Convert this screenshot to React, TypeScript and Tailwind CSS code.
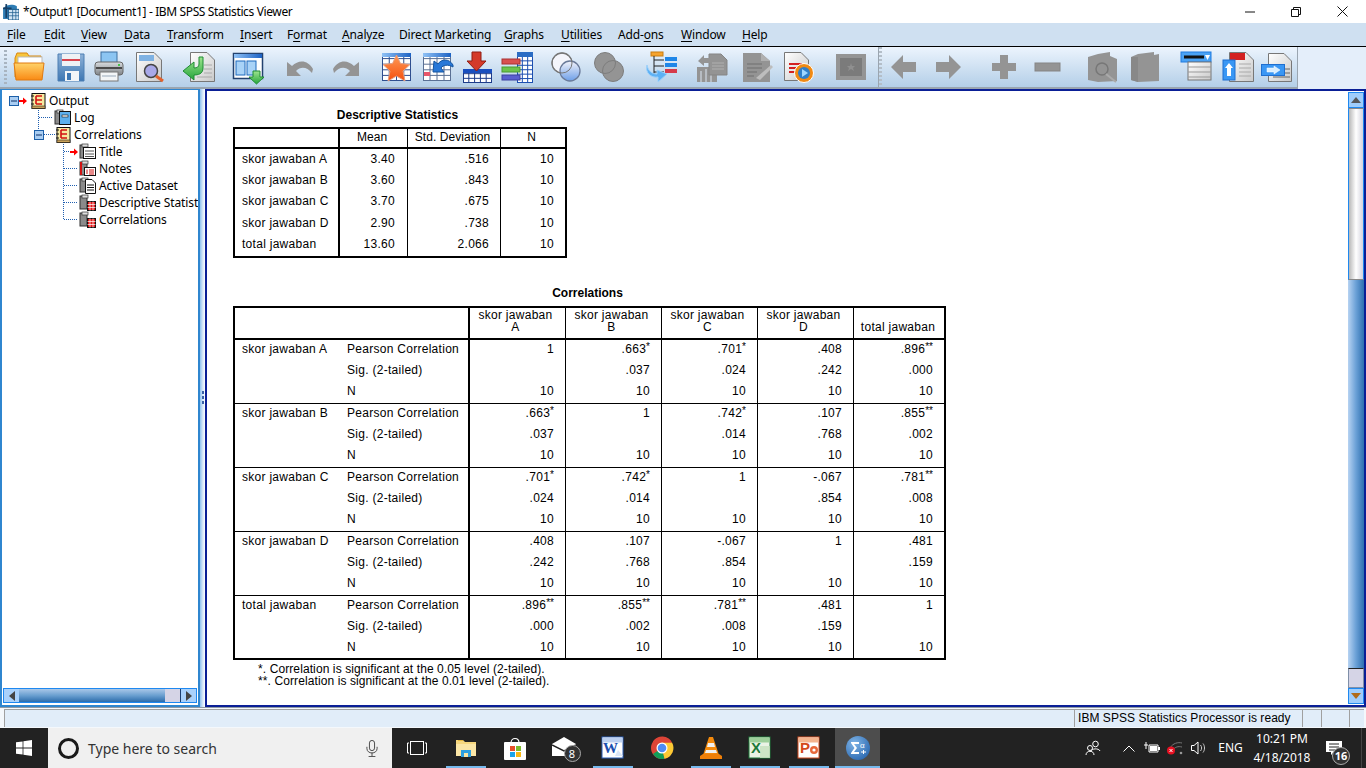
import React from "react";

const ui = "font-['Noto_Sans','Open_Sans',sans-serif]";
const arial = "font-['Liberation_Sans',Arial,sans-serif]";

function Grid({ x, y, w, h, cols, rows, c = "#2f4f8f", fill = "#fff" }: { x: number; y: number; w: number; h: number; cols: number; rows: number; c?: string; fill?: string }) {
  const v = [];
  for (let i = 1; i < cols; i++) v.push(<line key={"v" + i} x1={x + (w * i) / cols} y1={y} x2={x + (w * i) / cols} y2={y + h} stroke={c} />);
  for (let i = 1; i < rows; i++) v.push(<line key={"h" + i} x1={x} y1={y + (h * i) / rows} x2={x + w} y2={y + (h * i) / rows} stroke={c} />);
  return (
    <g>
      <rect x={x + 0.5} y={y + 0.5} width={w - 1} height={h - 1} fill={fill} stroke={c} />
      {v}
    </g>
  );
}

function Defs() {
  return (
    <svg width="0" height="0" className="absolute">
      <defs>
        <linearGradient id="fo" x1="0" y1="0" x2="0" y2="1"><stop offset="0" stopColor="#ffd36a" /><stop offset="1" stopColor="#f98a14" /></linearGradient>
        <linearGradient id="bl" x1="0" y1="0" x2="0" y2="1"><stop offset="0" stopColor="#8fb2d8" /><stop offset="1" stopColor="#3d77b3" /></linearGradient>
        <linearGradient id="gr" x1="0" y1="0" x2="0" y2="1"><stop offset="0" stopColor="#d9dcdf" /><stop offset="1" stopColor="#7f8488" /></linearGradient>
        <linearGradient id="dc" x1="0" y1="0" x2="1" y2="1"><stop offset="0" stopColor="#fff" /><stop offset="1" stopColor="#c9c9c9" /></linearGradient>
        <linearGradient id="gn" x1="0" y1="0" x2="0" y2="1"><stop offset="0" stopColor="#9fe58f" /><stop offset="1" stopColor="#25a53b" /></linearGradient>
        <linearGradient id="hd" x1="0" y1="0" x2="1" y2="0"><stop offset="0" stopColor="#8fc1f5" /><stop offset="1" stopColor="#1c62c4" /></linearGradient>
        <linearGradient id="sc" x1="0" y1="0" x2="0" y2="1"><stop offset="0" stopColor="#f3f3fa" /><stop offset="1" stopColor="#6d9fe8" /></linearGradient>
        <linearGradient id="or" x1="0" y1="0" x2="0" y2="1"><stop offset="0" stopColor="#ff9a55" /><stop offset="1" stopColor="#f4500f" /></linearGradient>
      </defs>
    </svg>
  );
}

const G = "#949494";
const Doc = ({ x = 6, w = 24, y = 1, h = 30, gray = false }: { x?: number; w?: number; y?: number; h?: number; gray?: boolean }) => (
  <path d={`M${x + 0.5} ${y + 0.5}H${x + w - 8}L${x + w - 0.5} ${y + 8}V${y + h - 0.5}H${x + 0.5}Z`} fill={gray ? G : "url(#dc)"} stroke={gray ? "#8a8a8a" : "#777"} />
);

const toolbarIcons: { ml: string; el: React.ReactNode }[] = [
  { ml: "ml-[6px]", el: (<g><path d="M2 7 L4 2H14L16 5H28V26H2Z" fill="#f7c53c" stroke="#d9860f" /><rect x="5" y="6" width="24" height="10" fill="#fff" stroke="#bbb" /><path d="M1 12H31L29 29H3Z" fill="url(#fo)" stroke="#e07a10" /></g>) },
  { ml: "ml-[10px]", el: (<g><path d="M3 3H29V30H3Z" fill="url(#bl)" stroke="#4c7fb3" /><rect x="7" y="3" width="18" height="12" fill="#eef1f5" /><rect x="7" y="8" width="18" height="2" fill="#d8434f" /><rect x="10" y="20" width="14" height="10" fill="#f2f5f8" /><rect x="12" y="22" width="4" height="7" fill="#3d77b3" /></g>) },
  { ml: "ml-[6px]", el: (<g><rect x="8" y="1" width="16" height="12" fill="#8cc5f2" stroke="#3d6f9f" /><rect x="2" y="11" width="28" height="13" rx="3" fill="url(#gr)" stroke="#666" /><rect x="3" y="16" width="26" height="2" fill="#4a4a4a" /><rect x="7" y="21" width="18" height="9" fill="#f3f6f8" stroke="#777" /><line x1="9" y1="25" x2="23" y2="25" stroke="#9ab" /><rect x="25" y="13" width="2" height="2" fill="#47c24a" /></g>) },
  { ml: "ml-[9px]", el: (<g><Doc x={2} w={26} /><rect x="5" y="4" width="15" height="6" fill="#7fb2e3" /><circle cx="17" cy="20" r="6.5" fill="#a8a8e8" stroke="#444" strokeWidth="1.5" /><line x1="22" y1="25" x2="29" y2="30" stroke="#e2622d" strokeWidth="3" /></g>) },
  { ml: "ml-[17px]", el: (<g><Doc x={7} w={25} /><g stroke="#aaa"><line x1="21" y1="14" x2="29" y2="14" /><line x1="21" y1="18" x2="29" y2="18" /><line x1="21" y1="22" x2="29" y2="22" /><line x1="14" y1="26" x2="29" y2="26" /></g><path d="M16 6H20V17C20 23 15 24 11 24V29L0 20L11 11V17C14 17 16 16 16 13Z" fill="url(#gn)" stroke="#1e8c34" /></g>) },
  { ml: "ml-[17px]", el: (<g><rect x="1.5" y="2.5" width="29" height="25" fill="#fff" stroke="#23426f" strokeWidth="1.5" /><rect x="2" y="3" width="28" height="4" fill="url(#hd)" /><rect x="4" y="10" width="9" height="14" fill="#a9d3f7" stroke="#1e6bbd" /><rect x="15" y="10" width="9" height="14" fill="#a9d3f7" stroke="#1e6bbd" /><path d="M21 20H28V26H32L24.5 33L17 26H21Z" fill="url(#gn)" stroke="#1e8c34" /></g>) },
  { ml: "ml-[21px]", el: <path d="M2 11V25H16L11 20C16 15 22 16 27 22L28 18C23 9 14 8 7 15Z" fill={G} /> },
  { ml: "ml-[12px]", el: <path d="M30 11V25H16L21 20C16 15 10 16 5 22L4 18C9 9 18 8 25 15Z" fill={G} /> },
  { ml: "ml-[20px]", el: (<g><Grid x={1} y={2} w={29} h={28} cols={4} rows={5} c="#2f4f8f" fill="#fff" /><rect x="1" y="2" width="29" height="4" fill="url(#hd)" /><path d="M15.5 4L19.5 12.5L29 13.5L22 20L24 30L15.5 25L7 30L9 20L2 13.5L11.5 12.5Z" fill="url(#or)" stroke="#e8a080" /></g>) },
  { ml: "ml-[9px]", el: (<g><Grid x={1} y={2} w={28} h={28} cols={4} rows={5} c="#5a7094" /><rect x="1" y="2" width="28" height="4" fill="url(#hd)" /><rect x="2" y="21" width="6" height="4" fill="#e8566a" /><path d="M31 14C27 7 19 8 16 13L12 10L11 21H22L19 17C21 14 26 13 31 16Z" fill="#2878d8" stroke="#15559f" /></g>) },
  { ml: "ml-[7px]", el: (<g><Grid x={2} y={18} w={29} h={14} cols={5} rows={3} c="#1d3c8a" fill="#fff" /><rect x="2" y="18" width="29" height="4" fill="#1a4fbf" /><path d="M11 1H20V10H25L15.5 20L6 10H11Z" fill="#d43a2a" stroke="#8f1d12" /></g>) },
  { ml: "ml-[8px]", el: (<g><Grid x={16} y={1} w={16} h={31} cols={3} rows={7} c="#1d4fb0" fill="#fff" /><rect x="16" y="1" width="16" height="5" fill="#2a6cc4" /><rect x="1" y="8" width="18" height="5" fill="#d95050" stroke="#a33" /><rect x="1" y="16" width="18" height="5" fill="#6dc44c" stroke="#4a9a30" /><rect x="1" y="24" width="18" height="5" fill="#5a5fd0" stroke="#3d40a0" /></g>) },
  { ml: "ml-[17px]", el: (<g><circle cx="12" cy="12" r="10" fill="#f4f5fb" stroke="#777" strokeWidth="1.3" /><circle cx="20" cy="20" r="10" fill="url(#sc)" stroke="#6a7a99" strokeWidth="1.3" /><circle cx="12" cy="12" r="10" fill="none" stroke="#777" strokeWidth="1" /></g>) },
  { ml: "ml-[11px]", el: (<g><circle cx="12" cy="12" r="10.5" fill={G} /><circle cx="20" cy="20" r="10.5" fill={G} stroke="#7d7d7d" /><circle cx="12" cy="12" r="10.5" fill="none" stroke="#7d7d7d" /></g>) },
  { ml: "ml-[20px]", el: (<g><rect x="6" y="1" width="12" height="4" fill="#f6a32e" stroke="#c97c10" /><path d="M9 5V24M9 9H19M9 15H19M9 21H19" stroke="#222" fill="none" /><rect x="20" y="6" width="12" height="4" fill="#1f86e8" /><rect x="20" y="12" width="12" height="4" fill="#1f86e8" /><rect x="20" y="18" width="12" height="4" fill="#d63a4a" /><path d="M2 14C0 22 6 27 13 26V31L22 23L12 19V23C7 23 3 20 2 14Z" fill="#5db1f5" stroke="#9cd0fa" /></g>) },
  { ml: "ml-[19px]", el: (<g fill={G}><rect x="1" y="16" width="20" height="15" /><g fill="#b7bcc2"><rect x="4" y="20" width="2" height="11" /><rect x="9" y="18" width="2" height="13" /><rect x="14" y="22" width="2" height="9" /></g><path d="M13 3H25L31 9V24H13Z" stroke="#858585" /><g stroke="#b0b0b0"><line x1="16" y1="12" x2="28" y2="12" /><line x1="16" y1="15" x2="28" y2="15" /><line x1="16" y1="18" x2="28" y2="18" /></g><path d="M2 10L8 4V7H14V12H8V15Z" /></g>) },
  { ml: "ml-[14px]", el: (<g><path d="M1 2H19L28 10V31H1Z" fill={G} /><path d="M19 2L28 10H19Z" fill="#b0b0b0" /><g stroke="#6f6f6f"><line x1="5" y1="13" x2="20" y2="13" /><line x1="5" y1="17" x2="20" y2="17" /><line x1="5" y1="21" x2="15" y2="21" /><line x1="5" y1="25" x2="12" y2="25" /></g><path d="M14 27L29 14L31 16L18 29Z" fill="#bdbdbd" /></g>) },
  { ml: "ml-[9px]", el: (<g><Doc x={1} w={25} y={1} h={29} /><rect x="6" y="12" width="13" height="2" fill="#d42020" /><rect x="6" y="16" width="11" height="2" fill="#d42020" /><rect x="6" y="20" width="9" height="2" fill="#d42020" /><circle cx="21" cy="22" r="9.5" fill="#f08a14" stroke="#fff" /><circle cx="21" cy="22" r="6" fill="#2f7ec8" /><path d="M19 18L25 22L19 26Z" fill="#9fd6ff" /></g>) },
  { ml: "ml-[20px]", el: (<g><rect x="1" y="3" width="30" height="26" fill={G} /><rect x="5" y="7" width="22" height="18" fill="#7b7b7b" /><path d="M16 12L17 15L20 15L18 17L19 20L16 18L13 20L14 17L12 15L15 15Z" fill="#8f8f8f" /></g>) },
];

const toolbarIcons2: { ml: string; el: React.ReactNode }[] = [
  { ml: "ml-[6px]", el: <path d="M3 16L15 4V11H28V21H15V28Z" fill={G} /> },
  { ml: "ml-[12px]", el: <path d="M29 16L17 4V11H4V21H17V28Z" fill={G} /> },
  { ml: "ml-[24px]", el: <path d="M12 4H20V12H28V20H20V28H12V20H4V12H12Z" fill={G} /> },
  { ml: "ml-[11px]", el: <rect x="4" y="12" width="25" height="8" fill={G} stroke="#858585" /> },
  { ml: "ml-[23px]", el: (<g fill={G}><path d="M2 6L12 3L24 1V5L31 8V30L12 31L2 29Z" /><circle cx="16" cy="18" r="6" fill="none" stroke="#777" strokeWidth="1.5" /><line x1="20" y1="23" x2="30" y2="31" stroke="#aaa" strokeWidth="2" /></g>) },
  { ml: "ml-[11px]", el: (<g><path d="M2 6L9 3L25 1V4L30 3V30L9 31L2 29Z" fill={G} /><path d="M2 6L9 6V31L2 29Z" fill="#888" /></g>) },
  { ml: "ml-[19px]", el: (<g><rect x="1" y="1" width="30" height="10" fill="#4aa2f4" stroke="#1f7ae0" /><rect x="4" y="4.5" width="20" height="3" fill="#111" /><path d="M25 4H30L27.5 9Z" fill="#fff" /><rect x="8" y="11" width="23" height="18" fill="url(#dc)" stroke="#777" /><line x1="8" y1="16" x2="31" y2="16" stroke="#999" /><line x1="8" y1="21" x2="31" y2="21" stroke="#999" /><line x1="8" y1="26" x2="31" y2="26" stroke="#999" /></g>) },
  { ml: "ml-[11px]", el: (<g><Doc x={6} w={25} y={1} h={30} /><rect x="7" y="2" width="15" height="7" fill="#d32020" /><g stroke="#aaa"><line x1="16" y1="13" x2="28" y2="13" /><line x1="16" y1="17" x2="28" y2="17" /><line x1="16" y1="21" x2="28" y2="21" /><line x1="16" y1="25" x2="28" y2="25" /></g><rect x="0" y="9" width="12" height="20" fill="#3a97f4" stroke="#1f6fd0" /><path d="M6 12L10 17H8V25H4V17H2Z" fill="#fff" /></g>) },
  { ml: "ml-[6px]", el: (<g><Doc x={7} w={24} y={2} h={29} /><g stroke="#666"><line x1="24" y1="18" x2="29" y2="18" /><line x1="24" y1="22" x2="29" y2="22" /><line x1="12" y1="26" x2="29" y2="26" /></g><rect x="0.5" y="13.5" width="23" height="11" fill="#3a97f4" stroke="#1f6fd0" /><path d="M6 17H13V15L19 19L13 23V21H6Z" fill="#d9eeff" stroke="#fff" strokeWidth="0.5" /></g>) },
];

const TI = ({ ml, el }: { ml: string; el: React.ReactNode }) => (
  <svg viewBox="0 0 32 32" className={`${ml} w-[32px] h-[32px] shrink-0 overflow-visible`}>{el}</svg>
);

const menus: [string, string, string, string][] = [
  ["", "F", "ile", "w-[37px]"],
  ["", "E", "dit", "w-[37px]"],
  ["", "V", "iew", "w-[43px]"],
  ["", "D", "ata", "w-[43px]"],
  ["", "T", "ransform", "w-[73px]"],
  ["", "I", "nsert", "w-[47px]"],
  ["F", "o", "rmat", "w-[55px]"],
  ["", "A", "nalyze", "w-[57px]"],
  ["Direct ", "M", "arketing", "w-[105px]"],
  ["", "G", "raphs", "w-[57px]"],
  ["", "U", "tilities", "w-[57px]"],
  ["Add-", "o", "ns", "w-[63px]"],
  ["", "W", "indow", "w-[61px]"],
  ["", "H", "elp", "w-[50px]"],
];

/* tree icons */
const BookY = () => (
  <svg viewBox="0 0 16 16" className="w-[16px] h-[16px] shrink-0">
    <rect x="2" y="0.5" width="13" height="15" fill="#f7e9a0" stroke="#111" />
    <rect x="2" y="13" width="13" height="2.5" fill="#caa25a" stroke="#111" strokeWidth="0.5" />
    <path d="M1 3H4M1 7H4M1 11H4" stroke="#111" />
    <path d="M6 3H12M6 3V11M6 7H12M6 11H12" stroke="#d21212" strokeWidth="1.6" fill="none" />
  </svg>
);
const Minus = () => (
  <svg viewBox="0 0 10 10" className="w-[10px] h-[10px] shrink-0">
    <rect x="0.5" y="0.5" width="9" height="9" fill="#a9cdf2" stroke="#1c5fa8" />
    <line x1="2" y1="5" x2="8" y2="5" stroke="#0b2f66" />
  </svg>
);
const RedArrow = () => (
  <svg viewBox="0 0 8 8" className="w-[8px] h-[8px] shrink-0">
    <path d="M0 3H4V0.5L8 4L4 7.5V5H0Z" fill="#f00" />
  </svg>
);
const Book = ({ kind }: { kind: "log" | "title" | "notes" | "doc" | "tbl" }) => (
  <svg viewBox="0 0 17 17" className="w-[17px] h-[17px] shrink-0">
    <rect x="1" y="2" width="7" height="13" fill="#8a8a8a" stroke="#333" />
    <rect x="3" y="1" width="6" height="3" fill="#ddd" stroke="#333" strokeWidth="0.7" />
    {kind === "log" && (<g><rect x="5.5" y="2.5" width="11" height="13" fill="#5db0ee" stroke="#111" /><rect x="8" y="6" width="6" height="2" fill="#fff" stroke="#111" strokeWidth="0.6" /></g>)}
    {kind === "title" && (<g><rect x="4.5" y="4.5" width="12" height="11" fill="#fff" stroke="#111" /><path d="M6 8H15M6 11H15M6 13.5H15" stroke="#555" /></g>)}
    {kind === "notes" && (<g><rect x="1" y="2" width="2" height="13" fill="#d21212" /><rect x="5.5" y="7.5" width="11" height="8" fill="#fff" stroke="#111" /><path d="M8 9.5V14M10 10H15M10 12H15M10 14H15" stroke="#d21212" /></g>)}
    {kind === "doc" && (<g><path d="M6.5 2.5H13L16.5 6V16.5H6.5Z" fill="#fff" stroke="#111" /><path d="M8 8H15M8 10.5H15M8 13H15" stroke="#111" /></g>)}
    {kind === "tbl" && (<g><rect x="8.5" y="7.5" width="8" height="9" fill="#e01818" stroke="#111" /><path d="M8.5 10.5H16.5M8.5 13.5H16.5M11 7.5V16.5M14 7.5V16.5" stroke="#fff" strokeWidth="0.7" /></g>)}
  </svg>
);

const rowsDesc = [
  ["skor jawaban A", "3.40", ".516", "10"],
  ["skor jawaban B", "3.60", ".843", "10"],
  ["skor jawaban C", "3.70", ".675", "10"],
  ["skor jawaban D", "2.90", ".738", "10"],
  ["total jawaban", "13.60", "2.066", "10"],
];

const corr: [string, string[], string[], string[]][] = [
  ["skor jawaban A", ["1", ".663*", ".701*", ".408", ".896**"], ["", ".037", ".024", ".242", ".000"], ["10", "10", "10", "10", "10"]],
  ["skor jawaban B", [".663*", "1", ".742*", ".107", ".855**"], [".037", "", ".014", ".768", ".002"], ["10", "10", "10", "10", "10"]],
  ["skor jawaban C", [".701*", ".742*", "1", "-.067", ".781**"], [".024", ".014", "", ".854", ".008"], ["10", "10", "10", "10", "10"]],
  ["skor jawaban D", [".408", ".107", "-.067", "1", ".481"], [".242", ".768", ".854", "", ".159"], ["10", "10", "10", "10", "10"]],
  ["total jawaban", [".896**", ".855**", ".781**", ".481", "1"], [".000", ".002", ".008", ".159", ""], ["10", "10", "10", "10", "10"]],
];

const Val = ({ v }: { v: string }) => {
  const m = v.match(/^([^*]*)(\*+)$/);
  if (!m) return <>{v}</>;
  return (
    <>
      {m[1]}
      <span className="relative -top-[3px] text-[10px] leading-none tracking-normal">{m[2]}</span>
    </>
  );
};

const dCell = "h-[21.4px] p-0 pb-[2px] align-middle leading-[12px]";
const cCell = "h-[21.33px] p-0 pb-[4px] align-middle leading-[12px]";
const cLast = "h-[19px] p-0 pb-[3px] align-middle leading-[12px]";

function DescTable() {
  const th = "h-[20px] pb-[2px] border-b-2 border-black text-center font-normal leading-[12px] pr-[3px] tracking-[0.05px]";
  return (
    <table className="w-[334px] table-fixed border-separate border-spacing-0 border-2 border-black">
      <colgroup>
        <col className="w-[105px]" />
        <col className="w-[68px]" />
        <col className="w-[93px]" />
        <col />
      </colgroup>
      <thead>
        <tr>
          <th className="h-[20px] border-b-2 border-r-2 border-black" />
          <th className={`${th} border-r`}>Mean</th>
          <th className={`${th} border-r`}>Std. Deviation</th>
          <th className={th}>N</th>
        </tr>
      </thead>
      <tbody>
        {rowsDesc.map((r) => (
          <tr key={r[0]}>
            <td className={`${dCell} pl-[7px] border-r-2 border-black`}>{r[0]}</td>
            <td className={`${dCell} pr-[12px] text-right border-r border-black`}>{r[1]}</td>
            <td className={`${dCell} pr-[11px] text-right border-r border-black`}>{r[2]}</td>
            <td className={`${dCell} pr-[11px] text-right`}>{r[3]}</td>
          </tr>
        ))}
      </tbody>
    </table>
  );
}

function CorrTable() {
  const heads = ["A", "B", "C", "D"];
  return (
    <table className="w-[713px] table-fixed border-separate border-spacing-0 border-2 border-black">
      <colgroup>
        <col className="w-[112px]" />
        <col className="w-[123px]" />
        <col className="w-[96px]" />
        <col className="w-[96px]" />
        <col className="w-[96px]" />
        <col className="w-[96px]" />
        <col />
      </colgroup>
      <thead>
        <tr>
          <th colSpan={2} className="h-[32px] border-b-2 border-r-2 border-black" />
          {heads.map((h) => (
            <th key={h} className="h-[32px] border-b-2 border-r border-black text-center font-normal leading-[12px] align-bottom pb-[5px] pr-[4px]">
              skor jawaban<br />{h}
            </th>
          ))}
          <th className="h-[32px] border-b-2 border-black text-center font-normal leading-[12px] align-bottom pb-[5px] pr-[2px]">total jawaban</th>
        </tr>
      </thead>
      <tbody>
        {corr.map((g, gi) =>
          [g[1], g[2], g[3]].map((vals, ri) => {
            const line = ri === 2 && gi < 4 ? "border-b" : "";
            const c = gi === 4 && ri === 2 ? cLast : cCell;
            return (
              <tr key={gi + "-" + ri}>
                <td className={`${c} pl-[7px] border-black whitespace-nowrap ${line}`}>{ri === 0 ? g[0] : ""}</td>
                <td className={`${c} border-r-2 border-black whitespace-nowrap ${line}`}>{["Pearson Correlation", "Sig. (2-tailed)", "N"][ri]}</td>
                {vals.map((v, i) => (
                  <td key={i} className={`${c} pr-[11px] text-right border-black whitespace-nowrap ${i < 4 ? "border-r" : ""} ${line}`}>
                    <Val v={v} />
                  </td>
                ))}
              </tr>
            );
          })
        )}
      </tbody>
    </table>
  );
}

const Tri = ({ d, c = "#555" }: { d: string; c?: string }) => (
  <svg viewBox="0 0 10 10" className="w-[10px] h-[10px]"><path d={d} fill={c} /></svg>
);

function VScroll() {
  const btn = "h-[16px] shrink-0 bg-[#9fcdfb] border border-[#1e88f0] flex items-center justify-center";
  return (
    <div className="w-[16px] shrink-0 flex flex-col mt-[1px] mb-[1px]">
      <div className={btn}><Tri d="M5 2L10 8H0Z" c="#55575a" /></div>
      <div className="h-[172px] shrink-0 bg-gradient-to-r from-[#b8b8b8] via-white to-[#d4d4de] border border-[#1e88f0] border-t-[#888] border-b-[#888]" />
      <div className="flex-1 bg-gradient-to-r from-[#b7d3f2] via-[#6aa0d6] to-[#2d70b0]" />
      <div className="h-[20px] shrink-0 bg-[#d5d4e6] border border-[#7f8fa8] border-t-[#222]" />
      <div className={btn}><Tri d="M0 2H10L5 8Z" c="#b06a17" /></div>
    </div>
  );
}

function HScroll() {
  const btn = "w-[15px] shrink-0 bg-[#a9d1fb] flex items-center justify-center";
  return (
    <div className="h-[15px] mx-[1px] mb-[2px] shrink-0 flex border border-[#1e88f0]">
      <div className={btn}><Tri d="M2 5L8 0V10Z" c="#444" /></div>
      <div className="flex-1 bg-gradient-to-b from-[#a9c7e8] via-[#6a9fd0] to-[#2b6cab]" />
      <div className="w-[16px] shrink-0 bg-[#d5d4e6] border-r border-[#1b3e70]" />
      <div className={btn}><Tri d="M8 5L2 0V10Z" c="#444" /></div>
    </div>
  );
}

const TreeRow = ({ pl, children, label }: { pl: string; children: React.ReactNode; label: string }) => (
  <div className={`h-[17px] flex items-center ${pl}`}>
    {children}
    <span className="ml-[3px] whitespace-nowrap leading-[17px] tracking-[-0.1px]">{label}</span>
  </div>
);

function Tree() {
  return (
    <div className={`relative flex-1 overflow-hidden pt-[2px] text-[12px] text-black ${ui}`}>
      <svg className="absolute left-0 top-0 w-[197px] h-[200px]" viewBox="0 0 197 200">
        <g stroke="#1f5fb0" strokeDasharray="1 1" fill="none">
          <path d="M36.5 20V40M37 27.5H51M42 44.5H53M61.5 54V129.5M62 61.5H68M62 78.5H76M62 95.5H76M62 112.5H76M62 129.5H76" />
        </g>
      </svg>
      <div className="relative">
        <TreeRow pl="pl-[7px]" label="Output"><Minus /><RedArrow /><span className="w-[3px]" /><BookY /></TreeRow>
        <TreeRow pl="pl-[52px]" label="Log"><Book kind="log" /></TreeRow>
        <TreeRow pl="pl-[32px]" label="Correlations"><Minus /><span className="w-[11px]" /><BookY /></TreeRow>
        <TreeRow pl="pl-[68px]" label="Title"><RedArrow /><span className="w-[1px]" /><Book kind="title" /></TreeRow>
        <TreeRow pl="pl-[77px]" label="Notes"><Book kind="notes" /></TreeRow>
        <TreeRow pl="pl-[77px]" label="Active Dataset"><Book kind="doc" /></TreeRow>
        <TreeRow pl="pl-[77px]" label="Descriptive Statist"><Book kind="tbl" /></TreeRow>
        <TreeRow pl="pl-[77px]" label="Correlations"><Book kind="tbl" /></TreeRow>
      </div>
    </div>
  );
}

/* taskbar icons */
const tb: { active?: boolean; line?: boolean; el: React.ReactNode }[] = [
  { line: true, el: (<svg viewBox="0 0 24 24" className="w-[24px] h-[24px]"><path d="M2 4H9L11 6H22V20H2Z" fill="#f6d77e" /><rect x="2" y="8" width="20" height="12" fill="#fbe6a6" /><rect x="7" y="14" width="10" height="7" fill="#2e9fe0" /><rect x="10" y="17" width="4" height="4" fill="#fbe6a6" /><rect x="4" y="4" width="5" height="1" fill="#e8b93e" /></svg>) },
  { el: (<svg viewBox="0 0 24 24" className="w-[24px] h-[24px]"><path d="M8 7C8 1 16 1 16 7" fill="none" stroke="#fff" strokeWidth="1.2" /><rect x="1" y="6" width="22" height="18" rx="1" fill="#fff" /><rect x="7" y="10" width="5" height="5" fill="#e8502a" /><rect x="13" y="10" width="5" height="5" fill="#7dbb2c" /><rect x="7" y="16" width="5" height="5" fill="#1ea4e8" /><rect x="13" y="16" width="5" height="5" fill="#fbb812" /></svg>) },
  { el: (
    <div className="relative w-[24px] h-[24px]">
      <svg viewBox="0 0 24 24" className="w-[24px] h-[24px]"><path d="M0 8L12 1L24 8V20H0Z" fill="#fff" /><path d="M0 9L12 15L24 9" fill="none" stroke="#222" strokeWidth="1.4" /></svg>
      <span className={`absolute left-[12px] top-[9px] w-[17px] h-[17px] rounded-full bg-[#333] border border-[#aaa] text-white text-[11px] leading-[15px] text-center ${ui}`}>8</span>
    </div>
  ) },
  { line: true, el: (<svg viewBox="0 0 24 24" className="w-[24px] h-[24px]"><rect x="1" y="1" width="21" height="21" fill="#fff" stroke="#2b5fb8" /><rect x="1.5" y="1.5" width="20" height="5" fill="#bcd0f0" /><text x="2" y="17" fontSize="15" fontWeight="700" fill="#1c4fb0" fontFamily="Liberation Serif">W</text><path d="M17 14L22 20H14Z" fill="#dbe6f7" /></svg>) },
  { el: (<svg viewBox="0 0 24 24" className="w-[24px] h-[24px]"><circle cx="12" cy="12" r="11" fill="#dd4437" /><path d="M12 12L3 18A11 11 0 0 0 14.5 22.8Z" fill="#119d58" /><path d="M12 6.5H22A11 11 0 0 1 14.5 22.8L12 12Z" fill="#fcc934" /><path d="M12 6.5H22A11 11 0 0 0 3 5.5L7 13Z" fill="#dd4437" /><circle cx="12" cy="12" r="5.5" fill="#fff" /><circle cx="12" cy="12" r="4.3" fill="#4e8bf4" /></svg>) },
  { line: true, el: (<svg viewBox="0 0 24 24" className="w-[24px] h-[24px]"><path d="M10 1H14L20 19H4Z" fill="#f48a0c" /><path d="M9 7H15L16 11H8Z" fill="#f0f0f0" /><path d="M7 14H17L18 17H6Z" fill="#f0f0f0" /><path d="M1 20L4 18H20L23 20V23H1Z" fill="#ef7f08" /></svg>) },
  { line: true, el: (<svg viewBox="0 0 24 24" className="w-[24px] h-[24px]"><rect x="1" y="1" width="21" height="21" fill="#eaf3e5" stroke="#1f7a3a" /><rect x="1.5" y="1.5" width="20" height="5" fill="#9dcf9a" /><text x="3" y="17" fontSize="15" fontWeight="700" fill="#1d7a3a" fontFamily="Liberation Sans">X</text><path d="M12 10H22V22H12Z" fill="#c5e0bd" opacity="0.8" /></svg>) },
  { line: true, el: (<svg viewBox="0 0 24 24" className="w-[24px] h-[24px]"><rect x="1" y="1" width="21" height="21" fill="#fff" stroke="#cf4b1e" /><rect x="1.5" y="1.5" width="20" height="5" fill="#f4b48e" /><text x="3" y="17" fontSize="15" fontWeight="700" fill="#d4491a" fontFamily="Liberation Sans">P</text><circle cx="17" cy="14" r="4" fill="#e8683a" /><circle cx="17" cy="14" r="1.6" fill="#fff" /></svg>) },
  { active: true, line: true, el: (<svg viewBox="0 0 24 24" className="w-[24px] h-[24px]"><defs><radialGradient id="sp" cx="0.35" cy="0.3" r="0.9"><stop offset="0" stopColor="#7fb4e6" /><stop offset="1" stopColor="#1e5da8" /></radialGradient></defs><circle cx="12" cy="12" r="12" fill="url(#sp)" /><path d="M5 6H13V8H8L11 12L8 16H13V18H5V17L8.5 12L5 7Z" fill="#fff" /><text x="14" y="12" fontSize="8" fill="#fff" fontFamily="Liberation Sans">α</text><path d="M15 16H20M17.5 14V18" stroke="#fff" /></svg>) },
];

export default function App() {
  return (
    <div className="w-[1366px] h-[768px] overflow-hidden flex flex-col bg-white relative">
      <Defs />
      {/* Title bar */}
      <div className={`h-[23px] shrink-0 flex items-center bg-white text-[12px] text-black ${ui}`}>
        <svg viewBox="0 0 16 16" className="ml-[2px] w-[17px] h-[17px] shrink-0">
          <path d="M1 5C5 1 10 1 14 3V15H1Z" fill="#2e7db5" />
          <rect x="6" y="6" width="10" height="10" fill="#cfe3f3" stroke="#1f5f8f" />
          <path d="M6 9H16M6 12H16M10 6V16M13 6V16" stroke="#1f5f8f" strokeWidth="0.7" />
          <path d="M4 1V14" stroke="#173f66" strokeWidth="1.6" />
          <path d="M1 5H9" stroke="#173f66" strokeWidth="1.6" />
        </svg>
        <span className="ml-[4px] whitespace-nowrap tracking-[-0.37px]">*Output1 [Document1] - IBM SPSS Statistics Viewer</span>
        <div className="ml-auto mr-[1px] flex h-full">
          <div className="w-[46px] flex items-center justify-center"><svg viewBox="0 0 10 10" className="w-[10px] h-[10px]"><path d="M0 5H10" stroke="#111" /></svg></div>
          <div className="w-[46px] flex items-center justify-center"><svg viewBox="0 0 10 10" className="w-[10px] h-[10px]"><path d="M0.5 2.5H7.5V9.5H0.5ZM2.5 2.5V0.5H9.5V7.5H7.5" stroke="#111" fill="none" /></svg></div>
          <div className="w-[46px] flex items-center justify-center"><svg viewBox="0 0 11 11" className="w-[11px] h-[11px]"><path d="M0.5 0.5L10.5 10.5M10.5 0.5L0.5 10.5" stroke="#111" /></svg></div>
        </div>
      </div>

      {/* Menu */}
      <div className={`h-[24px] shrink-0 flex items-center pl-[7px] bg-[#cfe0f1] border-b border-black text-[12px] text-black tracking-[-0.15px] ${ui}`}>
        {menus.map(([a, u, b, w]) => (
          <div key={a + u + b} className={`${w} shrink-0 whitespace-pre leading-[22px]`}>
            {a}<span className="underline underline-offset-2">{u}</span>{b}
          </div>
        ))}
      </div>

      {/* Toolbar */}
      <div className="h-[42px] shrink-0 flex bg-[#e4eefa]">
        <div className="w-[1298px] shrink-0 flex items-center bg-gradient-to-b from-[#ecf4fd] to-[#b4cfe8] border-b-2 border-b-[#9aa5b0] border-r border-r-[#9aa5b0]">
          <div className="ml-[4px] w-[3px] h-[34px] shrink-0 bg-[repeating-linear-gradient(to_bottom,#a8b4c0_0_2px,transparent_2px_4px)]" />
          {toolbarIcons.map((t, i) => <TI key={i} {...t} />)}
          <div className="ml-[11px] w-[4px] h-full shrink-0 border-l border-[#9aa5b0] bg-[repeating-linear-gradient(to_bottom,#b4bec8_0_2px,transparent_2px_4px)]" />
          {toolbarIcons2.map((t, i) => <TI key={i} {...t} />)}
        </div>
      </div>

      {/* Main */}
      <div className="h-[618px] shrink-0 flex">
        <div className="w-[200px] shrink-0 flex flex-col bg-white border-2 border-t border-[#2f86cf] border-l-[#2f86cf]">
          <Tree />
          <HScroll />
        </div>
        <div className="w-[5px] shrink-0 flex items-center justify-center bg-gradient-to-r from-[#8fc3f0] via-[#cfe4f8] to-white">
          <div className="w-[2px] h-[14px] bg-[repeating-linear-gradient(to_bottom,#3a63a8_0_3px,transparent_3px_5px)]" />
        </div>
        <div className={`flex-1 flex border-2 border-[#0a1f96] bg-white text-[12px] leading-[12px] tracking-[0.28px] text-black ${arial}`}>
          <div className="flex-1 overflow-hidden pl-[26px]">
            <div className="w-[334px] mt-[16px] h-[16px] text-center pr-[5px] font-bold tracking-normal leading-[16px]">Descriptive Statistics</div>
            <div className="mt-[4px]"><DescTable /></div>
            <div className="w-[712px] mt-[27px] h-[16px] text-center pr-[3px] font-bold tracking-normal leading-[16px]">Correlations</div>
            <div className="mt-[5px]"><CorrTable /></div>
            <div className="mt-[3px] pl-[25px] leading-[12px] tracking-[0.1px]">
              <div>*. Correlation is significant at the 0.05 level (2-tailed).</div>
              <div>**. Correlation is significant at the 0.01 level (2-tailed).</div>
            </div>
          </div>
          <VScroll />
        </div>
      </div>

      {/* Status */}
      <div className={`h-[21px] shrink-0 flex pl-[4px] pr-[2px] pt-[1px] pb-[1px] bg-[#f4f8fc] border-t border-[#8f9aa5] text-[12px] text-black ${arial}`}>
        <div className="flex-1 bg-[#e1edf9] border-t border-l border-[#a0a0a0]" />
        <div className="w-[228px] shrink-0 bg-[#e1edf9] border-t border-l border-[#a0a0a0] pl-[3px] leading-[17px] tracking-[0.05px] whitespace-nowrap">IBM SPSS Statistics Processor is ready</div>
        <div className="w-[19px] shrink-0 bg-[#e1edf9] border-t border-l border-[#a0a0a0]" />
        <div className="w-[28px] shrink-0 bg-[#e1edf9] border-t border-l border-[#a0a0a0]" />
        <div className="w-[15px] shrink-0 bg-[#e1edf9] border-t border-l border-[#a0a0a0]" />
      </div>

      {/* Taskbar */}
      <div className={`h-[40px] shrink-0 flex items-stretch bg-[#222222] text-white ${ui}`}>
        <div className="w-[48px] shrink-0 flex items-center justify-center">
          <svg viewBox="0 0 16 16" className="w-[16px] h-[16px]"><path d="M0 2.3L6.6 1.4V7.6H0ZM7.4 1.3L16 0V7.6H7.4ZM0 8.4H6.6V14.6L0 13.7ZM7.4 8.4H16V16L7.4 14.7Z" fill="#fff" /></svg>
        </div>
        <div className="w-[344px] shrink-0 flex items-center bg-[#f0f0f0] text-[#333]">
          <div className="ml-[10px] w-[21px] h-[21px] rounded-full border-[3px] border-[#1a1a1a] shrink-0" />
          <span className="ml-[9px] text-[14px] whitespace-nowrap">Type here to search</span>
          <svg viewBox="0 0 14 20" className="ml-auto mr-[14px] w-[12px] h-[17px]" fill="none" stroke="#333"><rect x="4" y="0.5" width="6" height="12" rx="3" /><path d="M1 8V10C1 17 13 17 13 10V8M7 15V19M3 19.5H11" /></svg>
        </div>
        <div className="w-[49px] shrink-0 flex items-center justify-center">
          <svg viewBox="0 0 20 14" className="w-[20px] h-[14px]" fill="none" stroke="#fff"><rect x="3.5" y="0.5" width="13" height="13" /><path d="M2 2H0.5V12H2M18 2H19.5V12H18" /></svg>
        </div>
        {tb.map((t, i) => (
          <div key={i} className="w-[49px] shrink-0 flex justify-center">
            <div className={`relative h-full flex items-center justify-center ${t.active ? "w-[45px] bg-[#4d4d4d]" : "w-[40px]"}`}>
              {t.el}
              {t.line && <div className="absolute left-0 right-0 bottom-0 h-[2px] bg-[#76b9ed]" />}
            </div>
          </div>
        ))}
        <div className="ml-auto flex items-center text-[12px]">
          <svg viewBox="0 0 16 16" className="w-[16px] h-[16px] mr-[22px]" fill="none" stroke="#fff"><circle cx="10.5" cy="4" r="2.8" /><path d="M6 12C6 8 14 8 15 11" /><circle cx="5" cy="8" r="2.5" /><path d="M1 15C1 10 9 10 9 15" /></svg>
          <svg viewBox="0 0 12 7" className="w-[12px] h-[7px] mr-[9px]" fill="none" stroke="#fff"><path d="M0.5 6.5L6 1L11.5 6.5" /></svg>
          <svg viewBox="0 0 16 12" className="w-[16px] h-[12px] mr-[7px]"><path d="M0 3H4M2 0V3M2 3V7M5 3H14V10H5Z" stroke="#fff" fill="none" /><rect x="6" y="4" width="7" height="5" fill="#fff" /><rect x="14" y="5" width="2" height="3" fill="#fff" /></svg>
          <svg viewBox="0 0 16 14" className="w-[16px] h-[14px] mr-[8px]"><path d="M3 7C6 2 11 1 15 2M6 9C8 6 11 5 15 6" stroke="#777" fill="none" /><circle cx="14" cy="12" r="1.3" fill="#999" /><circle cx="4" cy="9.5" r="4" fill="#e81123" /><path d="M2.5 8L5.5 11M5.5 8L2.5 11" stroke="#fff" /></svg>
          <svg viewBox="0 0 16 14" className="w-[16px] h-[14px] mr-[7px]" fill="none" stroke="#fff"><path d="M0.5 4.5H3L7 1V13L3 9.5H0.5Z" /><path d="M9.5 4C11 6 11 8 9.5 10M12 2.5C14 5 14 9 12 11.5" stroke="#ccc" /></svg>
          <span className="w-[33px] text-center whitespace-nowrap">ENG</span>
          <div className="ml-[5px] w-[60px] text-center leading-[19px] whitespace-nowrap">
            <div>10:21 PM</div>
            <div>4/18/2018</div>
          </div>
          <div className="relative w-[44px] mr-[5px] h-full flex items-center justify-center">
            <svg viewBox="0 0 16 14" className="w-[16px] h-[14px]"><path d="M0 0H16V11H8L5 14V11H0Z" fill="#fff" /><path d="M3 3H13M3 6H13M3 9H9" stroke="#222" /></svg>
            <span className="absolute left-[20px] top-[19px] w-[18px] h-[18px] rounded-full bg-[#333] border border-[#aaa] text-[11px] font-bold leading-[16px] text-center">16</span>
          </div>
          <div className="w-[5px] h-full border-l border-[#444]" />
        </div>
      </div>
    </div>
  );
}
